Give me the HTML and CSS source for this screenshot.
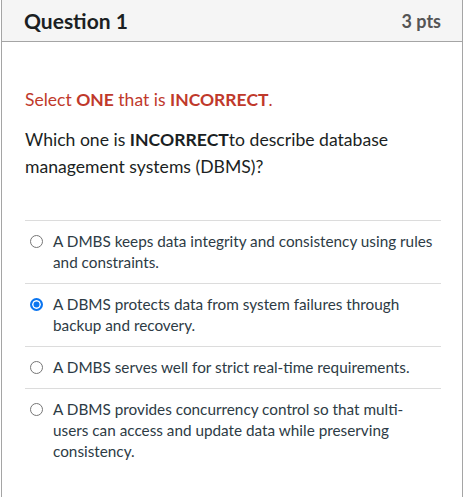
FILE: index.html
```html
<!DOCTYPE html>
<html>
<head>
<meta charset="utf-8">
<link rel="stylesheet" href="styles.css">
</head>
<body>
<div class="question">
  <div class="header">
    <span class="title">Question 1</span>
    <span class="pts">3 pts</span>
  </div>
  <div class="body">
    <p class="instr">Select <b>ONE</b> that is <b>INCORRECT</b>.</p>
    <p class="prompt">Which one is <b>INCORRECT</b>to describe database management systems (DBMS)?</p>
    <div class="answers">
      <label class="answer"><span class="radio"></span><span class="text">A DMBS keeps data integrity and consistency using rules and constraints.</span></label>
      <label class="answer"><span class="radio checked"></span><span class="text">A DBMS protects data from system failures through backup and recovery.</span></label>
      <label class="answer"><span class="radio"></span><span class="text">A DMBS serves well for strict real-time requirements.</span></label>
      <label class="answer"><span class="radio"></span><span class="text">A DBMS provides concurrency control so that multi-users can access and update data while preserving consistency.</span></label>
    </div>
  </div>
</div>
</body>
</html>
```

FILE: styles.css
```css
html, body {
  margin: 0;
  padding: 0;
  background: #fff;
}
body {
  font-family: Lato, "Noto Sans", sans-serif;
  color: #2d3b45;
}
.question {
  width: 462px;
  height: 497px;
  margin-left: 1px;
  box-sizing: border-box;
  border-left: 1px solid #a5a5a5;
  border-right: 1px solid #a5a5a5;
}
.header {
  height: 42px;
  box-sizing: border-box;
  background: #f5f5f5;
  border-bottom: 1px solid #a5a5a5;
  display: flex;
  align-items: center;
  justify-content: space-between;
  padding: 0 21px 0 22px;
}
.title {
  font-size: 21px;
  font-weight: 700;
  color: #1b1f23;
}
.pts {
  font-size: 18px;
  font-weight: 700;
  color: #555;
}
.body {
  padding: 0 21px 0 23px;
}
.instr {
  margin: 46px 0 0;
  font-size: 17.5px;
  line-height: 24px;
  color: #c0392b;
}
.prompt {
  margin: 14px 0 0;
  font-size: 17.6px;
  line-height: 27px;
  color: #1b1f23;
}
.answers {
  margin-top: 40px;
}
.answer {
  display: flex;
  align-items: flex-start;
  border-top: 1px solid #dcdcdc;
  padding: 10px 0;
  font-size: 15.3px;
  line-height: 21px;
  color: #2d3b45;
}
.radio {
  flex: none;
  width: 13px;
  height: 13px;
  border: 1px solid #767676;
  border-radius: 50%;
  margin: 4px 10px 0 5px;
  box-sizing: border-box;
  background: #fff;
}
.radio.checked {
  border: 2px solid #0b75f0;
  background: #0b75f0;
  box-shadow: inset 0 0 0 1.5px #fff;
}
.text {
  flex: 1;
  padding-right: 6px;
}
```
